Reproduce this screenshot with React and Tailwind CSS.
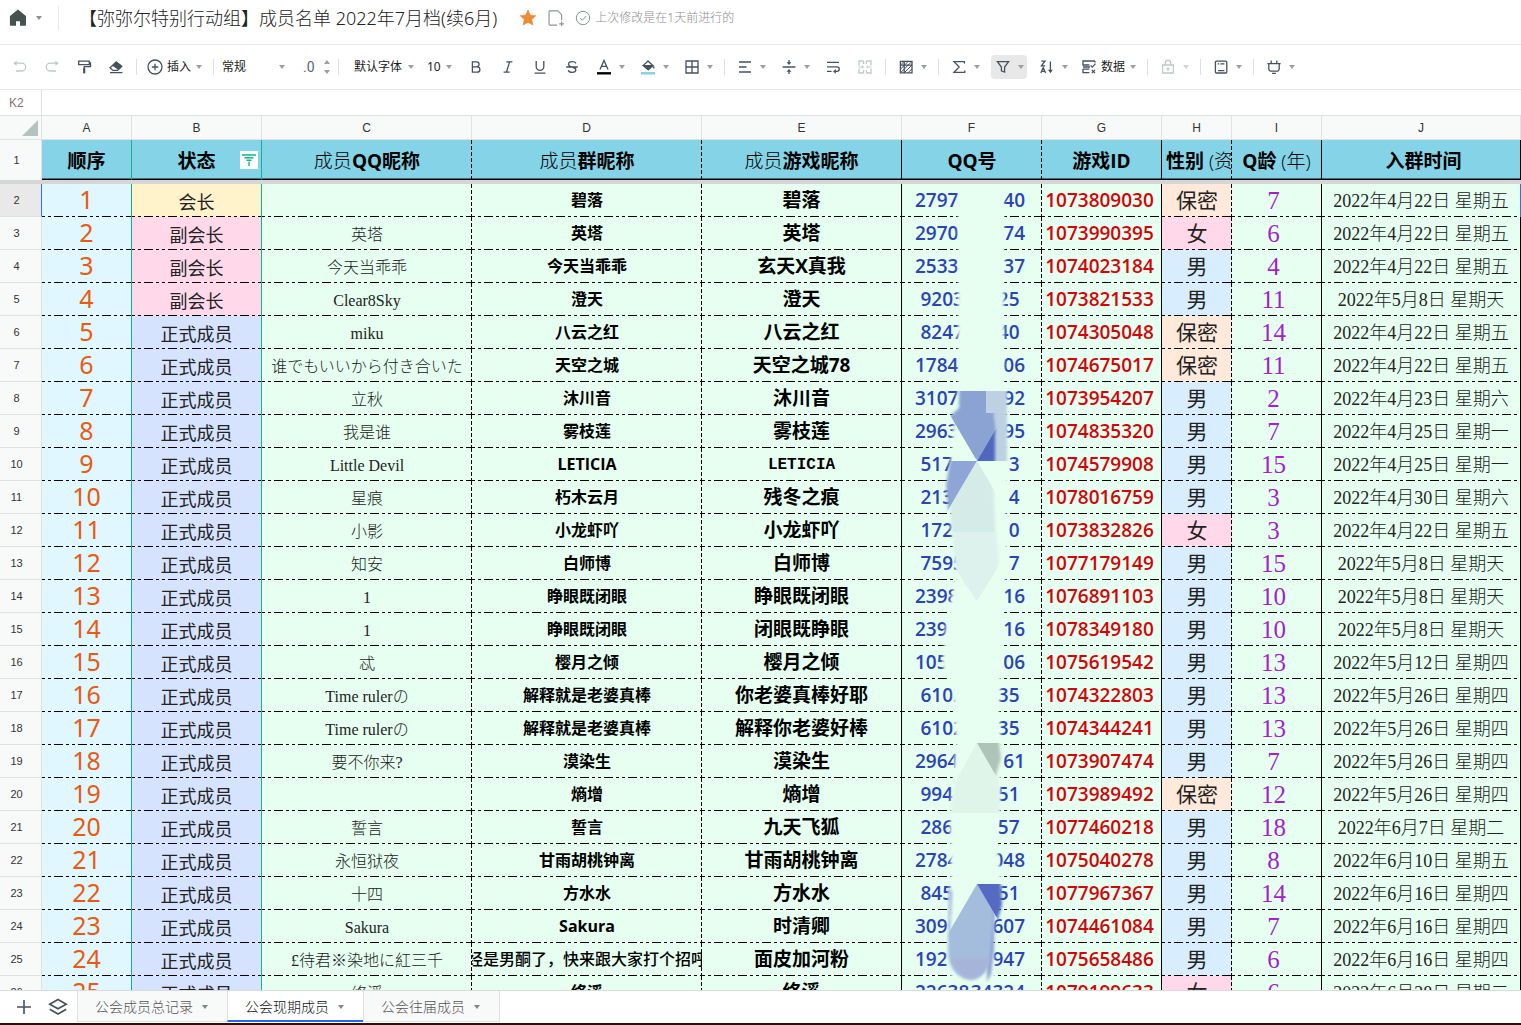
import React, { useState } from "react";

const COLUMNS = [
  { id: "A", width: "w-[90px]", title: "顺序", edge: "green" },
  { id: "B", width: "w-[130px]", title: "状态", edge: "green" },
  { id: "C", width: "w-[210px]", light: "成员", title: "QQ昵称", edge: "dash" },
  { id: "D", width: "w-[230px]", light: "成员", title: "群昵称", edge: "dash" },
  { id: "E", width: "w-[200px]", light: "成员", title: "游戏昵称", edge: "solid" },
  { id: "F", width: "w-[140px]", title: "QQ号", edge: "dash" },
  { id: "G", width: "w-[120px]", title: "游戏ID", edge: "solid" },
  { id: "H", width: "w-[70px]", title: "性别", note: " (资料)", edge: "dash" },
  { id: "I", width: "w-[90px]", title: "Q龄", note: " (年)", edge: "solid" },
  { id: "J", width: "w-auto", title: " 入群时间", edge: "solid" },
];

// status, qq name, group name, game name, qq start, qq end, qq digits, game id, gender, years, joined
const MEMBERS = [
  ["会长", "", "碧落", "碧落", "2797", "40", 10, "1073809030", "保密", 7, "2022年4月22日 星期五"],
  ["副会长", "英塔", "英塔", "英塔", "2970", "74", 10, "1073990395", "女", 6, "2022年4月22日 星期五"],
  ["副会长", "今天当乖乖", "今天当乖乖", "玄天X真我", "2533", "37", 10, "1074023184", "男", 4, "2022年4月22日 星期五"],
  ["副会长", "Clear8Sky", "澄天", "澄天", "9203", "25", 9, "1073821533", "男", 11, "2022年5月8日 星期天"],
  ["正式成员", "miku", "八云之红", "八云之红", "8247", "40", 9, "1074305048", "保密", 14, "2022年4月22日 星期五"],
  ["正式成员", "谁でもいいから付き合いた", "天空之城", "天空之城78", "1784", "06", 10, "1074675017", "保密", 11, "2022年4月22日 星期五"],
  ["正式成员", "立秋", "沐川音", "沐川音", "3107", "92", 10, "1073954207", "男", 2, "2022年4月23日 星期六"],
  ["正式成员", "我是谁", "雾枝莲", "雾枝莲", "2963", "95", 10, "1074835320", "男", 7, "2022年4月25日 星期一"],
  ["正式成员", "Little Devil", "LETICIA", "LETICIA", "517", "3", 9, "1074579908", "男", 15, "2022年4月25日 星期一"],
  ["正式成员", "星痕", "朽木云月", "残冬之痕", "213", "4", 9, "1078016759", "男", 3, "2022年4月30日 星期六"],
  ["正式成员", "小影", "小龙虾吖", "小龙虾吖", "172", "0", 9, "1073832826", "女", 3, "2022年4月22日 星期五"],
  ["正式成员", "知安", "白师博", "白师博", "7595", "7", 9, "1077179149", "男", 15, "2022年5月8日 星期天"],
  ["正式成员", "1", "睁眼既闭眼", "睁眼既闭眼", "2398", "16", 10, "1076891103", "男", 10, "2022年5月8日 星期天"],
  ["正式成员", "1", "睁眼既闭眼", "闭眼既睁眼", "239", "16", 10, "1078349180", "男", 10, "2022年5月8日 星期天"],
  ["正式成员", "忒", "樱月之倾", "樱月之倾", "105", "06", 10, "1075619542", "男", 13, "2022年5月12日 星期四"],
  ["正式成员", "Time rulerの", "解释就是老婆真棒", "你老婆真棒好耶", "6102", "35", 9, "1074322803", "男", 13, "2022年5月26日 星期四"],
  ["正式成员", "Time rulerの", "解释就是老婆真棒", "解释你老婆好棒", "6102", "35", 9, "1074344241", "男", 13, "2022年5月26日 星期四"],
  ["正式成员", "要不你来?", "漠染生", "漠染生", "2964", "61", 10, "1073907474", "男", 7, "2022年5月26日 星期四"],
  ["正式成员", "", "熵增", "熵增", "994", "51", 9, "1073989492", "保密", 12, "2022年5月26日 星期四"],
  ["正式成员", "誓言", "誓言", "九天飞狐", "286", "57", 9, "1077460218", "男", 18, "2022年6月7日 星期二"],
  ["正式成员", "永恒狱夜", "甘雨胡桃钟离", "甘雨胡桃钟离", "2784", "048", 10, "1075040278", "男", 8, "2022年6月10日 星期五"],
  ["正式成员", "十四", "方水水", "方水水", "845", "51", 9, "1077967367", "男", 14, "2022年6月16日 星期四"],
  ["正式成员", "Sakura", "Sakura", "时清卿", "3090", "607", 10, "1074461084", "男", 7, "2022年6月16日 星期四"],
  ["正式成员", "£待君※染地に紅三千", "经是男酮了，快来跟大家打个招呼", "面皮加河粉", "192", "947", 10, "1075658486", "男", 6, "2022年6月16日 星期四"],
  ["正式成员", "络溪", "络溪", "络溪", "22638", "34324", 10, "1079199633", "女", 6, "2022年6月28日 星期二"],
];

const STATUS_BG = {
  会长: "bg-[#fff3cc]",
  副会长: "bg-[#ffd9ea]",
  正式成员: "bg-[#d6e3ff]",
};

const GENDER_BG = {
  保密: "bg-[#ffe9db]",
  女: "bg-[#ffd9ea]",
  男: "bg-[#d8eeff]",
};

const EDGE = {
  green: "border-r border-r-[#13b28c]",
  solid: "border-r border-r-black",
  dash: "",
};

const SANS = "font-['Noto_Sans','Noto_Sans_CJK_SC',sans-serif]";
const BOLD = "font-['Open_Sans','Noto_Sans_CJK_SC',sans-serif] font-bold";
const SERIF = "font-['Liberation_Serif','Noto_Sans_CJK_SC',serif] font-light";

function Icon({ size = 16, className = "", children }) {
  return (
    <svg
      width={size}
      height={size}
      viewBox="0 0 16 16"
      fill="none"
      stroke="currentColor"
      strokeWidth="1.3"
      className={`shrink-0 ${className}`}
      aria-hidden="true"
    >
      {children}
    </svg>
  );
}

function Caret({ className = "text-[#9a9f9f]" }) {
  return (
    <svg width="6" height="4" viewBox="0 0 6 4" className={`shrink-0 ${className}`} aria-hidden="true">
      <path d="M0 0h6L3 4z" fill="currentColor" />
    </svg>
  );
}

function Divider() {
  return <span className="h-4 w-px shrink-0 bg-[#dcdfdf]" />;
}

function Tool({ label, menu, active, disabled, children }) {
  return (
    <button
      type="button"
      aria-label={label}
      disabled={disabled}
      className={`flex h-6 shrink-0 items-center rounded-sm ${menu ? "w-9 justify-between pl-1 pr-[3px]" : "w-6 justify-center"} ${
        active ? "bg-[#e8e8e8]" : ""
      } ${disabled ? "text-[#bfc9c6]" : "text-[#45515c]"}`}
    >
      {children}
      {menu && <Caret className={disabled ? "text-[#d3d6d6]" : "text-[#9a9f9f]"} />}
    </button>
  );
}

function Picker({ label, options, className }) {
  return (
    <label className={`relative flex h-6 shrink-0 items-center ${className}`}>
      <select
        aria-label={label}
        className="h-6 w-full appearance-none bg-transparent text-xs text-[#222] outline-none"
      >
        {options.map((option) => (
          <option key={option}>{option}</option>
        ))}
      </select>
      <Caret className="pointer-events-none absolute right-1 text-[#9a9f9f]" />
    </label>
  );
}

function TitleBar() {
  return (
    <header className="flex h-[45px] shrink-0 items-center border-b border-[#e6e8e8] pb-2 pl-2">
      <button type="button" aria-label="首页" className="flex items-center gap-2">
        <svg width="20" height="20" viewBox="0 0 20 20" aria-hidden="true">
          <path
            d="M10 1.6 2.3 7.8c-.3.3-.4.6-.4 1v8c0 .6.4 1 1 1H8v-4.6h4v4.6h5c.6 0 1-.4 1-1v-8c0-.4-.1-.7-.4-1z"
            fill="#46524f"
          />
        </svg>
        <Caret className="text-[#8a9090]" />
      </button>
      <span className="ml-4 h-6 w-px bg-[#e6e8e8]" />
      <h1 className="ml-5 whitespace-nowrap text-lg font-light text-[#222]">
        【弥弥尔特别行动组】成员名单 2022年7月档(续6月)
      </h1>
      <button type="button" aria-label="收藏" className="ml-[22px]">
        <svg width="18" height="18" viewBox="0 0 18 18" aria-hidden="true">
          <path
            d="M9 1.2l2.3 5 5.4.6-4 3.7 1.1 5.4L9 13.2l-4.8 2.7 1.1-5.4-4-3.7 5.4-.6z"
            fill="#ee8a35"
            stroke="#ee8a35"
            strokeWidth=".8"
            strokeLinejoin="round"
          />
        </svg>
      </button>
      <button type="button" aria-label="移动到" className="ml-[10px] text-[#8b9391]">
        <Icon size={18}>
          <path d="M9 14.3H2.6a.8.8 0 0 1-.8-.8v-11c0-.4.4-.8.8-.8h7L13 5v5" strokeWidth="1" />
          <path d="M10.8 13.2h4.400M13 11v4.400" strokeWidth="1" />
        </Icon>
      </button>
      <span className="ml-[10px] flex items-center gap-1 whitespace-nowrap text-xs font-light text-[#8e8e8e]">
        <Icon className="text-[#8b9391]">
          <circle cx="8" cy="8" r="6.7" strokeWidth="1" />
          <path d="M5 8l2.2 2.3L11.2 6" strokeWidth="1" />
        </Icon>
        上次修改是在1天前进行的
      </span>
    </header>
  );
}

function Toolbar() {
  return (
    <div className="flex h-[45px] shrink-0 items-center gap-2 border-b border-[#e6e8e8] pl-2">
      <Tool label="撤销" disabled>
        <Icon>
          <path d="M3.2 4.2h6.6a3.8 3.8 0 0 1 0 7.8H4" />
          <path d="M4.6 1.6v5.2L1.4 4.2z" fill="currentColor" stroke="none" />
        </Icon>
      </Tool>
      <Tool label="重做" disabled>
        <Icon>
          <path d="M12.8 4.2H6.2a3.8 3.8 0 0 0 0 7.8H12" />
          <path d="M11.4 1.6v5.2l3.2-2.6z" fill="currentColor" stroke="none" />
        </Icon>
      </Tool>
      <Tool label="格式刷">
        <Icon>
          <path d="M2.7 2.2h10.6v3.4H2.7zM13.3 3.9h1.2v3.8H8.2v2" />
          <path d="M8.2 9.2v5.2" strokeWidth="2.2" />
        </Icon>
      </Tool>
      <Tool label="清除格式">
        <Icon>
          <path d="M2 8.8l6.2-5.6 5.4 4.2-4.2 4H4.8z" />
          <path d="M5 6.4l3.2-3.2 5.4 4.2-3 2.8z" fill="currentColor" />
          <path d="M2 13.6h12.4" />
        </Icon>
      </Tool>
      <Divider />
      <button type="button" className="flex h-6 w-[60px] shrink-0 items-center gap-1 pl-[2px] text-xs text-[#222]">
        <Icon className="text-[#45515c]">
          <circle cx="8" cy="8" r="7" />
          <path d="M8 4.8v6.4M4.8 8h6.4" />
        </Icon>
        插入
        <span className="ml-auto mr-[3px]">
          <Caret />
        </span>
      </button>
      <Divider />
      <Picker label="数字格式" options={["常规", "文本", "日期"]} className="w-[67px]" />
      <div className="flex h-6 w-[33px] shrink-0 items-center justify-between pl-[6px] text-sm text-[#5d6668]">
        <span className="font-['Roboto',sans-serif]">.0</span>
        <span className="flex flex-col gap-1">
          <button type="button" aria-label="增加小数位" className="flex rotate-180 py-px text-[#9a9f9f]">
            <Caret />
          </button>
          <button type="button" aria-label="减少小数位" className="flex py-px text-[#9a9f9f]">
            <Caret />
          </button>
        </span>
      </div>
      <Divider />
      <Picker label="字体" options={["默认字体", "宋体", "黑体"]} className="w-[71px] pl-[7px]" />
      <Picker label="字号" options={["10", "12", "14"]} className="w-[30px] pl-px font-['Noto_Sans',sans-serif]" />
      <Tool label="加粗">
        <Icon>
          <path d="M4.4 2.9h4.2a2.4 2.4 0 0 1 0 4.9H4.4zM4.4 7.8h4.8a2.7 2.7 0 0 1 0 5.4H4.4z" />
        </Icon>
      </Tool>
      <Tool label="斜体">
        <Icon>
          <path d="M6.4 2.9h6M3.6 13.2h6M9.6 2.9L6.4 13.2" />
        </Icon>
      </Tool>
      <Tool label="下划线">
        <Icon>
          <path d="M4.2 2v5.6a3.8 3.8 0 0 0 7.6 0V2M2.6 14.2h10.8" />
        </Icon>
      </Tool>
      <Tool label="删除线">
        <Icon>
          <path d="M12 4.4C11.2 3 9.8 2.6 8.2 2.6c-2 0-3.6 1-3.6 2.6 0 1.6 1.6 2.2 3.4 2.8 2.2.6 3.8 1.2 3.8 2.8s-1.6 2.6-3.6 2.6-3.4-.8-4-2.2M2.2 8h11.6" />
        </Icon>
      </Tool>
      <Tool label="字体颜色" menu>
        <Icon>
          <path d="M4 10.4L8 1.4l4 9M5.3 7.4h5.4" />
          <path d="M1 14.3h14" stroke="#000" strokeWidth="2.4" />
        </Icon>
      </Tool>
      <Tool label="填充颜色" menu>
        <Icon>
          <path d="M3.4 6.4L8 2l4.8 4.6-4.6 4z" />
          <path d="M3.4 6.6h9.2l-4.4 4z" fill="currentColor" />
          <path d="M13.6 7.4v2" strokeWidth="1.8" />
          <path d="M1 14.3h14" stroke="#84cfe2" strokeWidth="2.4" />
        </Icon>
      </Tool>
      <Tool label="边框" menu>
        <Icon>
          <path d="M2 2h12v12H2zM8 2v12M2 8h12" />
        </Icon>
      </Tool>
      <Divider />
      <Tool label="水平对齐" menu>
        <Icon>
          <path d="M2 3h12M2 8h7.5M2 13h12" />
        </Icon>
      </Tool>
      <Tool label="垂直对齐" menu>
        <Icon>
          <path d="M1.6 8h12.8M8 1v3M8 12v3" />
          <path d="M5.6 3.2h4.8L8 6zM5.6 12.8h4.8L8 10z" fill="currentColor" stroke="none" />
        </Icon>
      </Tool>
      <Tool label="自动换行">
        <Icon>
          <path d="M2 3.4h12M2 7.8h10a2.2 2.2 0 0 1 0 4.6h-2.4M2 12.4h4.6" />
          <path d="M10.8 10v4.8L8 12.4z" fill="currentColor" stroke="none" />
        </Icon>
      </Tool>
      <Tool label="合并单元格" disabled>
        <Icon>
          <path d="M6.6 2H2v4.6M9.4 2H14v4.6M6.6 14H2V9.4M9.4 14H14V9.4M6.6 2v3M9.4 2v3M6.6 14v-3M9.4 14v-3" />
          <path d="M1.6 8H6M14.4 8H10M5 6.6L6.6 8 5 9.4M11 6.6L9.4 8 11 9.4" strokeWidth="1" />
        </Icon>
      </Tool>
      <Divider />
      <Tool label="冻结" menu>
        <Icon>
          <path d="M2.4 2.4h11.6v11.4H2.4zM2.4 6.2H14M6.2 2.4v11.4" />
          <path d="M2.6 6l3.6-3.6M2.6 10l7.6-7.6M2.6 13.6L13.8 2.6M6.4 13.6l7.4-7.4M10.2 13.6l3.6-3.6" strokeWidth="1" />
        </Icon>
      </Tool>
      <Divider />
      <Tool label="函数" menu>
        <Icon>
          <path d="M13.4 4.4V2.7H3L8.2 8 3 13.3h10.8v-1.7" />
        </Icon>
      </Tool>
      <Tool label="筛选" menu active>
        <Icon>
          <path d="M2.4 2.6h11.2L9.6 8v5l-3.2-1.2V8z" />
        </Icon>
      </Tool>
      <Tool label="排序" menu>
        <Icon>
          <path d="M2.4 2.2H6L2.4 6.8h3.8M1.8 14l2.4-5.4L6.6 14M2.8 12.4h3M11.4 2.4v10" />
          <path d="M9 10.8h4.8l-2.4 3.4z" fill="currentColor" stroke="none" />
        </Icon>
      </Tool>
      <button type="button" className="flex h-6 w-[60px] shrink-0 items-center gap-1 pl-[2px] text-xs text-[#222]">
        <Icon className="text-[#45515c]">
          <path d="M14 2H2v4h6.4M14 2v1.6M9 8H2M2 10v3.6h6.4M2 10.2h6.4" />
          <path d="M9.6 6.4l1.8 1.8 3-3.6M10.8 11l3.2 3.2M14 11l-3.2 3.2" strokeWidth="1.2" />
        </Icon>
        数据
        <span className="ml-auto mr-[3px]">
          <Caret />
        </span>
      </button>
      <Divider />
      <Tool label="保护" menu disabled>
        <Icon>
          <path d="M2.6 6h10.8v8H2.6zM5.2 6V4.2a2.8 2.8 0 0 1 5.6 0V6M8 8.2v3.6M6.4 9.8h3.2" />
        </Icon>
      </Tool>
      <Divider />
      <Tool label="视图" menu>
        <Icon>
          <rect x="2.4" y="2.2" width="11.4" height="11.8" rx="1" />
          <path d="M4.6 4.8h1.6M7.4 4.8h4M5 11.6h6.4" />
        </Icon>
      </Tool>
      <Divider />
      <Tool label="插件" menu>
        <Icon>
          <path d="M1.4 4.6h13.2M2.8 4.6v5.2a2.4 2.4 0 0 0 2.4 2.4h5.6a2.4 2.4 0 0 0 2.4-2.4V4.6M5.2 1.4v3M10.8 1.4v3M6 14.4h4" />
        </Icon>
      </Tool>
    </div>
  );
}

// One cell: the right edge is set by the column, the bottom edge is a dash-dot-dot rule.
function Cell({ edge, bg, className = "", children }) {
  return (
    <td className={`relative h-[33px] overflow-hidden p-0 align-middle ${edge ? EDGE[edge] : ""} ${bg}`}>
      <div
        className={`flex h-[33px] items-center justify-center whitespace-nowrap bg-[linear-gradient(90deg,#000_3px,transparent_3px,transparent_6px,#000_6px,#000_9px,transparent_9px,transparent_12px,#000_12px,#000_21px,transparent_21px)] bg-[length:24px_1px] bg-bottom-left bg-repeat-x leading-none ${className}`}
      >
        {children}
      </div>
      {edge === "dash" && <DashEdge />}
    </td>
  );
}

function DashEdge() {
  return (
    <span className="absolute inset-y-0 right-0 w-px bg-[repeating-linear-gradient(180deg,#000_0,#000_4px,transparent_4px,transparent_6px)]" />
  );
}

function HeaderCell({ column }) {
  return (
    <th
      scope="col"
      className={`relative h-10 overflow-hidden border-b border-b-black bg-[#84d3e6] p-0 text-[19px] leading-none text-black shadow-[inset_0_-1px_#41707c] ${EDGE[column.edge]} ${BOLD}`}
    >
      <div
        className={`flex items-center whitespace-pre pt-[3px] ${column.id === "H" ? "justify-start pl-1" : "justify-center"}`}
      >
        {column.light && <span className="font-light">{column.light}</span>}
        {column.title}
        {column.note && <span className="font-light">{column.note}</span>}
      </div>
      {column.id === "B" && (
        <button
          type="button"
          aria-label="筛选状态"
          className="absolute right-[3px] top-[11px] flex size-[18px] items-center justify-center bg-white text-[#13b28c]"
        >
          <svg width="14" height="14" viewBox="0 0 14 14" stroke="currentColor" strokeWidth="1.4" aria-hidden="true">
            <path d="M0 2h14M2.5 4.7h9M4.5 7.3h5M7 8.5V13" />
          </svg>
        </button>
      )}
      {column.edge === "dash" && <DashEdge />}
    </th>
  );
}

function MemberRow({ member, index }) {
  const [status, qqName, groupName, gameName, qqStart, qqEnd, digits, gameId, gender, years, joined] = member;
  const selected = index === 0;
  const longName = groupName.length > 12;
  const latinGame = /^[A-Z]+$/.test(gameName);

  return (
    <tr>
      <th
        scope="row"
        className={`h-[33px] border-b border-r border-b-[#dfe2e2] p-0 pr-2 text-[11px] font-normal text-[#333] ${
          selected ? "border-r-[#2f6fe8] bg-[#e9e9e9]" : "border-r-[#dfe2e2] bg-[#f8faf9]"
        } font-['Liberation_Sans',sans-serif]`}
      >
        {index + 2}
      </th>
      <Cell edge="green" bg="bg-[#e0f7ff]" className={`${SANS} pb-[3px] text-[25px] text-[#eb5a10]`}>
        {index + 1}
      </Cell>
      <Cell edge="green" bg={STATUS_BG[status]} className={`${SANS} pt-[3px] text-[18px] text-[#222]`}>
        {status}
      </Cell>
      <Cell edge="dash" bg="bg-[#e6fff0]" className={`${SERIF} pt-[3px] text-base text-[#222]`}>
        {qqName}
      </Cell>
      <Cell
        edge="dash"
        bg="bg-[#e6fff0]"
        className={`pb-px ${longName ? `${SANS} text-base font-medium text-black` : `${BOLD} text-base text-black`}`}
      >
        {groupName}
      </Cell>
      <Cell
        edge="solid"
        bg="bg-[#e6fff0]"
        className={
          latinGame
            ? "pt-px font-['Liberation_Mono',monospace] text-base font-bold text-black"
            : `${BOLD} text-[19px] text-black`
        }
      >
        {gameName}
      </Cell>
      <Cell
        edge="dash"
        bg="bg-[#e6fff0]"
        className="pb-px pr-1 font-['Open_Sans',sans-serif] text-[19px] font-semibold text-[#2b44b4]"
      >
        <span className={`flex justify-between ${digits === 10 ? "w-[110px]" : "w-[99px]"}`}>
          <span>{qqStart}</span>
          <span>{qqEnd}</span>
        </span>
      </Cell>
      <Cell
        edge="solid"
        bg="bg-[#e6fff0]"
        className="pb-px pr-1 font-['Open_Sans',sans-serif] text-[19px] font-semibold text-[#d0060a]"
      >
        {gameId}
      </Cell>
      <Cell edge="dash" bg={GENDER_BG[gender]} className={`${SANS} pb-px text-[21px] text-[#222]`}>
        {gender}
      </Cell>
      <Cell edge="solid" bg="bg-[#e6fff0]" className={`${SERIF} pb-px pr-[6px] text-[25px] text-[#a31fd0]`}>
        {years}
      </Cell>
      <Cell
        bg={`border-r bg-[#e6fff0] ${selected ? "border-r-[#2f6fe8]" : "border-r-black"}`}
        className={`${SERIF} pt-px text-[18px] text-[#222]`}
      >
        {joined}
      </Cell>
    </tr>
  );
}

// Smudge that hides the middle digits of column F.
function Smudge() {
  return (
    <svg
      width="140"
      height="806"
      viewBox="902 184 140 806"
      className="pointer-events-none absolute left-[902px] top-[68px]"
      aria-hidden="true"
    >
      <defs>
        <filter id="soft" x="-20%" y="-20%" width="140%" height="140%">
          <feGaussianBlur stdDeviation="1.8" />
        </filter>
        <clipPath id="facet1">
          <path d="M940 391h46v22h18L977 461 940 398z" />
        </clipPath>
        <clipPath id="facet2">
          <path d="M986 391h30v70h-39V391z" />
        </clipPath>
        <clipPath id="facet3">
          <path d="M977 461l30-51v51z" />
        </clipPath>
        <clipPath id="facet4">
          <path d="M930 461h47l-37 63h-10z" />
        </clipPath>
        <clipPath id="facet5">
          <path d="M977 461l37 63v8h-80v2z" />
        </clipPath>
        <clipPath id="facet6">
          <path d="M930 532h90l-43 69-47-69z" />
        </clipPath>
        <clipPath id="facet7">
          <path d="M977 743l40 70h-80z" />
        </clipPath>
        <clipPath id="facet8">
          <path d="M977 743h40v69z" />
        </clipPath>
        <clipPath id="facet9">
          <path d="M977 884l60 100v10h-124z" />
        </clipPath>
        <clipPath id="facet10">
          <path d="M977 884h40v68z" />
        </clipPath>
      </defs>
      <path
        filter="url(#soft)"
        fill="#e6fff0"
        d="M958 194V390l-5 40-3 40 1 30 2 40 4 30-6 30-5 25-4 40 11 25 3 55-4 45-2 40 1 40-1 25-2 35-1 42 8 8h41l-4-40 3-30 7-25-5-40 1-25 2-35 3-30-4-40 3-60 2-60 4-40-2-40 3-50-3-40-2-40V194z"
      />
      <g clipPath="url(#facet2)">
        <path filter="url(#soft)" fill="#bdd1e2" d="M970 380h37v90h-37z" />
      </g>
      <g clipPath="url(#facet1)">
        <path filter="url(#soft)" fill="#8aa3d3" d="M959 380h35v80h-44v-44l9-8z" />
      </g>
      <path filter="url(#soft)" fill="#8aa3d3" d="M978 415h9l7 7 1 10-16 24z" />
      <g clipPath="url(#facet3)">
        <path filter="url(#soft)" fill="#5067bd" d="M960 420h35v50h-35z" />
      </g>
      <g clipPath="url(#facet4)">
        <path filter="url(#soft)" fill="#8fa5d6" d="M952 450h40v80h-42l-4-45z" />
      </g>
      <g clipPath="url(#facet5)">
        <path filter="url(#soft)" fill="#d4ebe8" d="M952 450h40l4 95h-44l-2-40z" />
      </g>
      <g clipPath="url(#facet6)">
        <path filter="url(#soft)" fill="#ddf2ec" d="M951 520h44l4 40-8 50h-28l-8-45z" />
      </g>
      <g clipPath="url(#facet7)">
        <path filter="url(#soft)" fill="#e0f5e9" d="M964 730h34l3 95h-53l5-30z" />
      </g>
      <g clipPath="url(#facet8)">
        <path filter="url(#soft)" fill="#b0c3b9" d="M960 730h37l4 28-6 20h-30z" />
      </g>
      <path filter="url(#soft)" fill="#b9c8e8" d="M948 886l5 6-3 44h-2z" />
      <g clipPath="url(#facet9)">
        <path filter="url(#soft)" fill="#8d9fd4" d="M975 890h20l-1 60-3 24-4 8V950z" />
        <path
          filter="url(#soft)"
          fill="#a5bddd"
          d="M948 870h45v50l-3 34c-2 16-10 26-19 26s-21-8-23-25z"
        />
      </g>
      <path filter="url(#soft)" fill="#a7b4da" d="M951 958h39c-2 14-9 20-18 20s-18-6-21-20z" />
      <g clipPath="url(#facet10)">
        <path filter="url(#soft)" fill="#556bc0" d="M960 870h40l2 35-6 20h-30z" />
      </g>
    </svg>
  );
}

function Sheet() {
  return (
    <main className="relative min-h-0 flex-1 overflow-hidden bg-white">
      <table className="w-full table-fixed border-separate border-spacing-0">
        <colgroup>
          <col className="w-[42px]" />
          {COLUMNS.map((column) => (
            <col key={column.id} className={column.width} />
          ))}
        </colgroup>
        <thead>
          <tr className="bg-[#f8faf9] font-['Liberation_Sans',sans-serif] text-xs text-[#333]">
            <td className="h-6 border-b border-r border-[#dfe2e2] p-0">
              <svg width="16" height="16" viewBox="0 0 16 16" className="ml-auto mr-[3px]" aria-hidden="true">
                <path d="M16 0v16H0z" fill="#b4c4bc" />
              </svg>
            </td>
            {COLUMNS.map((column) => (
              <th key={column.id} scope="col" className="h-6 border-b border-r border-[#dfe2e2] p-0 font-normal">
                {column.id}
              </th>
            ))}
          </tr>
          <tr>
            <th
              scope="row"
              className="h-10 border-r border-r-[#dfe2e2] bg-[#f8faf9] p-0 pr-2 font-['Liberation_Sans',sans-serif] text-[11px] font-normal text-[#333]"
            >
              1
            </th>
            {COLUMNS.map((column) => (
              <HeaderCell key={column.id} column={column} />
            ))}
          </tr>
          <tr>
            <td colSpan={11} className="h-1 bg-[#d6d6d6] p-0" />
          </tr>
        </thead>
        <tbody>
          {MEMBERS.map((member, index) => (
            <MemberRow key={index} member={member} index={index} />
          ))}
        </tbody>
      </table>
      <Smudge />
    </main>
  );
}

function SheetTabs() {
  const tabs = ["公会成员总记录", "公会现期成员", "公会往届成员"];
  const [current, setCurrent] = useState(1);

  return (
    <footer className="flex h-[35px] shrink-0 items-start border-b-2 border-t border-b-[#2d0f08] border-t-[#d9dcdc] bg-white">
      <button type="button" aria-label="新建工作表" className="ml-4 mt-2 text-[#45515c]">
        <Icon>
          <path d="M8 1v14M1 8h14" strokeWidth="1.6" />
        </Icon>
      </button>
      <button type="button" aria-label="工作表列表" className="ml-4 mr-[9px] mt-[6px] text-[#45515c]">
        <Icon size={20}>
          <path d="M8 2l6.6 3.8L8 9.4 1.4 5.8zM1.4 9.8L8 13.6l6.6-3.8" />
        </Icon>
      </button>
      <nav className="flex">
        {tabs.map((tab, index) => (
          <button
            key={tab}
            type="button"
            onClick={() => setCurrent(index)}
            className={`flex h-[31px] items-center gap-[9px] whitespace-nowrap border-l border-[#dfe2e2] pl-[17px] pr-[19px] pt-[2px] text-sm font-light last:border-r ${
              index === current
                ? "border-b-2 border-b-[#2268f5] bg-white text-[#111]"
                : "border-b border-b-[#dfe2e2] bg-[#f8faf9] text-[#555]"
            }`}
          >
            {tab}
            <Caret className="text-[#7f8888]" />
          </button>
        ))}
      </nav>
    </footer>
  );
}

export default function App() {
  return (
    <div className={`flex h-screen flex-col overflow-hidden bg-white text-[#222] ${SANS}`}>
      <TitleBar />
      <Toolbar />
      <div className="flex h-[26px] shrink-0 items-center border-b border-[#dfe2e2]">
        <span className="flex h-full w-[42px] items-center border-r border-[#dfe2e2] pl-[9px] font-['Liberation_Sans',sans-serif] text-xs text-[#8a7070]">
          K2
        </span>
        <input type="text" aria-label="编辑栏" className="h-full flex-1 px-2 text-xs outline-none" />
      </div>
      <Sheet />
      <SheetTabs />
    </div>
  );
}
